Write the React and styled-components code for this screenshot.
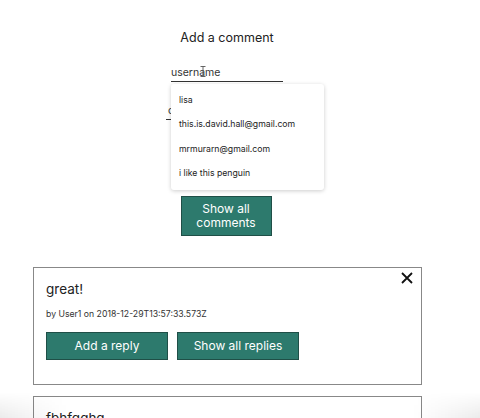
import React from "react";
import styled, { createGlobalStyle } from "styled-components";

const Global = createGlobalStyle`
  html, body { margin: 0; padding: 0; background: #fff; }
  body { font-family: "Inter", "Noto Sans", sans-serif; color: #222; overflow: hidden; }
`;

const Page = styled.div`
  width: 454px;
  display: flex;
  flex-direction: column;
  align-items: center;
  padding-top: 30px;
`;

const Title = styled.h2`
  margin: 0;
  font-size: 12.5px;
  font-weight: 400;
  line-height: 15px;
  color: #222;
`;

const Form = styled.div`
  position: relative;
  width: 122px;
  display: flex;
  flex-direction: column;
  align-items: flex-start;
  margin-top: 21px;
`;

const Field = styled.div`
  position: relative;
  width: ${(p) => p.$w}px;
  margin-left: ${(p) => p.$ml || 0}px;
  margin-top: ${(p) => p.$mt || 0}px;
  border-bottom: 1.5px solid #333;
  font-size: 10.5px;
  line-height: 14px;
  padding: 0 0 1px ${(p) => p.$pl || 0}px;
  color: #333;
  box-sizing: border-box;
`;

const Cursor = styled.svg`
  position: absolute;
  left: 29px;
  top: 0px;
`;

const Dropdown = styled.ul`
  position: absolute;
  left: 5px;
  top: 18px;
  width: 153px;
  margin: 0;
  padding: 4px 0 5px;
  list-style: none;
  background: #fff;
  border-radius: 3px;
  box-shadow: 0 1px 4px rgba(0, 0, 0, 0.2);
  box-sizing: border-box;
`;

const Option = styled.li`
  height: 24.3px;
  display: flex;
  align-items: center;
  padding-left: 8px;
  font-size: 8.7px;
  color: #222;
`;

const TealButton = styled.button`
  background: #2d7a6d;
  color: #fff;
  border: 1.5px solid #1f4f47;
  font-family: inherit;
  font-size: 12px;
  line-height: 14px;
  width: ${(p) => p.$w}px;
  height: ${(p) => p.$h}px;
  padding: 0;
  cursor: pointer;
  box-sizing: border-box;
`;

const ShowAll = styled(TealButton)`
  margin-top: 76px;
  margin-left: -2px;
`;

const Card = styled.div`
  position: relative;
  align-self: flex-start;
  margin-left: 33px;
  margin-top: ${(p) => p.$mt}px;
  width: 389px;
  height: ${(p) => p.$h || 118}px;
  border: 1.5px solid #888;
  box-sizing: border-box;
  padding: 13px 12px 0 12px;
  background: #fff;
`;

const CardTitle = styled.div`
  font-size: 13.5px;
  line-height: 17px;
  color: #222;
`;

const Meta = styled.div`
  margin-top: 10px;
  font-size: 8.7px;
  line-height: 12px;
  color: #333;
`;

const Actions = styled.div`
  display: flex;
  gap: 9px;
  margin-top: 12px;
`;

const Close = styled.button`
  position: absolute;
  top: 3px;
  right: 7px;
  background: none;
  border: none;
  padding: 0;
  width: 14px;
  height: 14px;
  cursor: pointer;
`;

const Fade = styled.div`
  position: fixed;
  left: 0;
  right: 0;
  bottom: 0;
  height: 26px;
  pointer-events: none;
  background: linear-gradient(to right, rgba(0,0,0,0.08), rgba(0,0,0,0) 14%, rgba(0,0,0,0) 86%, rgba(0,0,0,0.08));
  -webkit-mask-image: linear-gradient(to bottom, transparent, black);
  mask-image: linear-gradient(to bottom, transparent, black);
`;

export default function App() {
  const users = ["lisa", "this.is.david.hall@gmail.com", "mrmurarn@gmail.com", "i like this penguin"];
  return (
    <>
      <Global />
      <Page>
        <Title>Add a comment</Title>
        <Form>
          <Field $w={112} $ml={5}>
            username
            <Cursor width="6" height="11" viewBox="0 0 6 11">
              <path d="M0.5 0.5 H5.5 M3 0.5 V10.5 M0.5 10.5 H5.5" stroke="#555" strokeWidth="0.9" fill="none" />
            </Cursor>
          </Field>
          <Field $w={122} $mt={22} $pl={2}>comment</Field>
          <Dropdown>
            {users.map((u) => (
              <Option key={u}>{u}</Option>
            ))}
          </Dropdown>
        </Form>
        <ShowAll $w={91} $h={40}>
          Show all
          <br />
          comments
        </ShowAll>
        <Card $mt={31}>
          <CardTitle>great!</CardTitle>
          <Meta>by User1 on 2018-12-29T13:57:33.573Z</Meta>
          <Actions>
            <TealButton $w={122} $h={28}>Add a reply</TealButton>
            <TealButton $w={122} $h={28}>Show all replies</TealButton>
          </Actions>
          <Close aria-label="close">
            <svg width="14" height="14" viewBox="0 0 14 14">
              <path d="M2 2 L12 12 M12 2 L2 12" stroke="#111" strokeWidth="1.8" fill="none" />
            </svg>
          </Close>
        </Card>
        <Card $mt={11} $h={60}>
          <CardTitle>fbhfgqhg</CardTitle>
        </Card>
      </Page>
      <Fade />
    </>
  );
}
